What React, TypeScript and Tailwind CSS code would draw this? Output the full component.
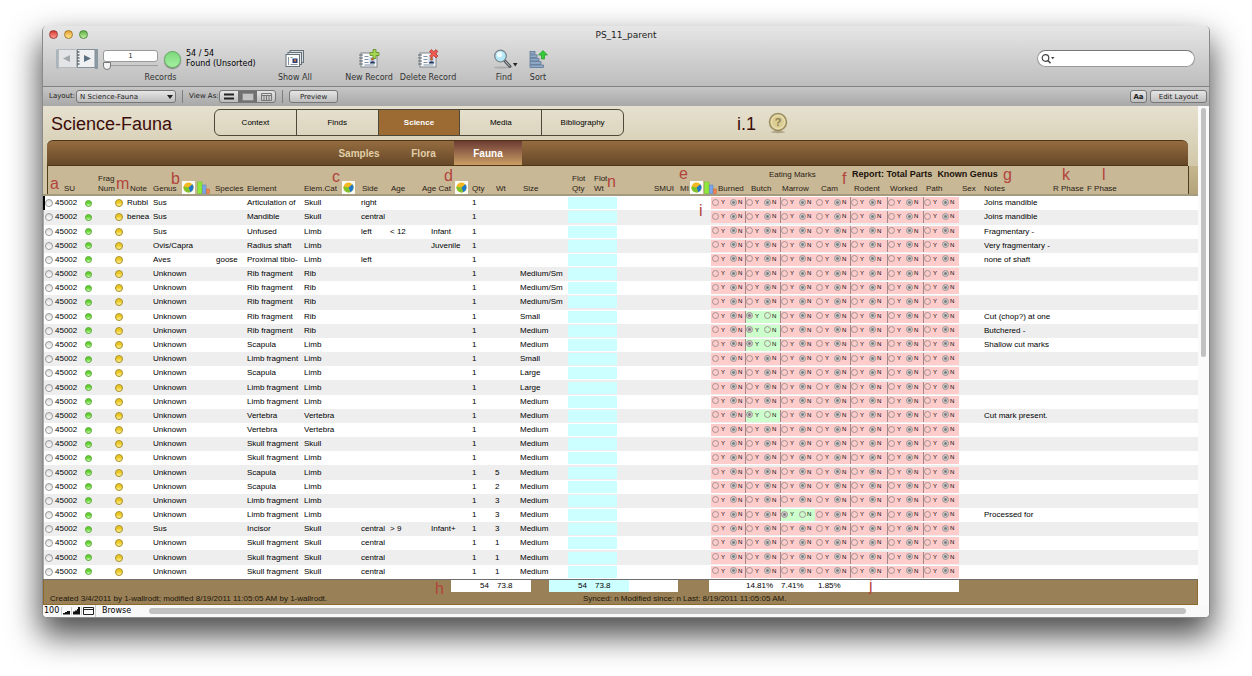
import { useState } from "react";
import clsx from "clsx";

interface FaunaRecord {
  note?: string;
  genus: string;
  species?: string;
  element: string;
  elemCat: string;
  side?: string;
  age?: string;
  ageCat?: string;
  wt?: string;
  size?: string;
  yes?: string;
  notes?: string;
}

const records: FaunaRecord[] = [
  { note: "Rubbl", genus: "Sus", element: "Articulation of", elemCat: "Skull", side: "right", notes: "Joins mandible" },
  { note: "benea", genus: "Sus", element: "Mandible", elemCat: "Skull", side: "central", notes: "Joins mandible" },
  { genus: "Sus", element: "Unfused", elemCat: "Limb", side: "left", age: "< 12", ageCat: "Infant", notes: "Fragmentary -" },
  { genus: "Ovis/Capra", element: "Radius shaft", elemCat: "Limb", ageCat: "Juvenile", notes: "Very fragmentary -" },
  { genus: "Aves", species: "goose", element: "Proximal tibio-", elemCat: "Limb", side: "left", notes: "none of shaft" },
  { genus: "Unknown", element: "Rib fragment", elemCat: "Rib", size: "Medium/Sm" },
  { genus: "Unknown", element: "Rib fragment", elemCat: "Rib", size: "Medium/Sm" },
  { genus: "Unknown", element: "Rib fragment", elemCat: "Rib", size: "Medium/Sm" },
  { genus: "Unknown", element: "Rib fragment", elemCat: "Rib", size: "Small", yes: "Butch", notes: "Cut (chop?) at one" },
  { genus: "Unknown", element: "Rib fragment", elemCat: "Rib", size: "Medium", yes: "Butch", notes: "Butchered -" },
  { genus: "Unknown", element: "Scapula", elemCat: "Limb", size: "Medium", yes: "Butch", notes: "Shallow cut marks" },
  { genus: "Unknown", element: "Limb fragment", elemCat: "Limb", size: "Small" },
  { genus: "Unknown", element: "Scapula", elemCat: "Limb", size: "Large" },
  { genus: "Unknown", element: "Limb fragment", elemCat: "Limb", size: "Large" },
  { genus: "Unknown", element: "Limb fragment", elemCat: "Limb", size: "Medium" },
  { genus: "Unknown", element: "Vertebra", elemCat: "Vertebra", size: "Medium", yes: "Butch", notes: "Cut mark present." },
  { genus: "Unknown", element: "Vertebra", elemCat: "Vertebra", size: "Medium" },
  { genus: "Unknown", element: "Skull fragment", elemCat: "Skull", size: "Medium" },
  { genus: "Unknown", element: "Skull fragment", elemCat: "Limb", size: "Medium" },
  { genus: "Unknown", element: "Scapula", elemCat: "Limb", wt: "5", size: "Medium" },
  { genus: "Unknown", element: "Scapula", elemCat: "Limb", wt: "2", size: "Medium" },
  { genus: "Unknown", element: "Limb fragment", elemCat: "Limb", wt: "3", size: "Medium" },
  { genus: "Unknown", element: "Limb fragment", elemCat: "Limb", wt: "3", size: "Medium", yes: "Marrow", notes: "Processed for" },
  { genus: "Sus", element: "Incisor", elemCat: "Skull", side: "central", age: "> 9", ageCat: "Infant+", wt: "3", size: "Medium" },
  { genus: "Unknown", element: "Skull fragment", elemCat: "Skull", side: "central", wt: "1", size: "Medium" },
  { genus: "Unknown", element: "Skull fragment", elemCat: "Skull", side: "central", wt: "1", size: "Medium" },
  { genus: "Unknown", element: "Skull fragment", elemCat: "Skull", side: "central", wt: "1", size: "Medium" },
];

const marks = [
  { name: "Burned", divider: false, th: "pl-[7px]" },
  { name: "Butch", divider: true, th: "pl-[6px]" },
  { name: "Marrow", divider: true, th: "pl-[2px]" },
  { name: "Cam", divider: false, th: "pl-[6px]" },
  { name: "Rodent", divider: true, th: "pl-[4px]" },
  { name: "Worked", divider: true, th: "pl-[3px]" },
  { name: "Path", divider: true, th: "pl-[3px]" },
];

const columnWidths = [
  "w-[11px]", "w-[29px]", "w-[13px]", "w-[17px]", "w-[13px]", "w-[25px]", "w-[62px]", "w-[32px]", "w-[57px]", "w-[57px]",
  "w-[29px]", "w-[32px]", "w-[50px]", "w-[23px]", "w-[25px]", "w-[50px]", "w-[24px]", "w-[25px]", "w-[94px]",
  "w-[34px]", "w-[35px]", "w-[35px]", "w-[35px]", "w-[37px]", "w-[36px]", "w-[36px]",
  "w-[23px]", "w-[68px]", "w-[35px]", "w-auto", "w-[10px]",
];

// Callout letters printed over the form
const callouts = [
  { letter: "a", pos: "left-[7px] top-[70px]" },
  { letter: "m", pos: "left-[73px] top-[70px]" },
  { letter: "b", pos: "left-[128px] top-[65px]" },
  { letter: "c", pos: "left-[289px] top-[63px]" },
  { letter: "d", pos: "left-[401px] top-[62px]" },
  { letter: "e", pos: "left-[636px] top-[60px]" },
  { letter: "n", pos: "left-[564px] top-[68px]" },
  { letter: "i", pos: "left-[656px] top-[97px]" },
  { letter: "f", pos: "left-[799px] top-[65px]" },
  { letter: "g", pos: "left-[960px] top-[61px]" },
  { letter: "k", pos: "left-[1019px] top-[61px]" },
  { letter: "l", pos: "left-[1059px] top-[61px]" },
  { letter: "h", pos: "left-[392px] top-[475px]" },
  { letter: "j", pos: "left-[826px] top-[472px]" },
];

function PieIcon() {
  return (
    <svg viewBox="0 0 13 13" className="size-[13px] shrink-0" aria-hidden="true">
      <rect width="13" height="13" fill="#fbfbf5" />
      <circle cx="6.5" cy="6.5" r="5" fill="#f4b820" />
      <path d="M6.5 6.5 10.4 3.3A5 5 0 0 1 8 11.2Z" fill="#1e78c8" />
      <path d="M6.5 6.5 8 11.2A5 5 0 0 1 1.6 5.6Z" fill="#7cc22c" />
    </svg>
  );
}

function BarsIcon() {
  return (
    <svg viewBox="0 0 13 13" className="size-[13px] shrink-0" aria-hidden="true">
      <rect x="0.5" y="1" width="4.5" height="11.5" fill="#8fe83a" stroke="#6cbf28" strokeWidth="0.5" />
      <rect x="5.5" y="4" width="3.5" height="8.5" fill="#7ba6e8" stroke="#5580c4" strokeWidth="0.5" />
      <rect x="9.5" y="8" width="2.8" height="4.500" fill="#ee8450" stroke="#c96030" strokeWidth="0.5" />
    </svg>
  );
}

function RecordSheet() {
  return (
    <>
      <rect x="3" y="5" width="16" height="14" fill="#fafafa" stroke="#7e868c" />
      <path d="M1 7h4M1 10h4M1 13h4M1 16h4" stroke="#5f6a74" strokeWidth="1.2" />
      <path d="M6.500 8.500h4M6.500 11.500h4M6.500 14.500h4M6.500 17h10" stroke="#7f93a8" />
      <rect x="11.500" y="9" width="6" height="6.500" fill="#c4d4ea" />
      <circle cx="14.500" cy="11" r="1.500" fill="#b5642c" />
      <path d="M12 15.500c0-3 5-3 5 0z" fill="#22345a" />
    </>
  );
}

function ShowAllIcon() {
  return (
    <svg viewBox="0 0 22 22" className="size-[22px]" aria-hidden="true">
      <rect x="6" y="2.500" width="13.500" height="12" fill="#d5dade" stroke="#66717a" />
      <rect x="4" y="4.500" width="13.500" height="12" fill="#e4e7ea" stroke="#66717a" />
      <rect x="2" y="6.500" width="13.500" height="12" fill="#fafafa" stroke="#66717a" />
      <path d="M4.500 9v8M6.500 9.500h2M6.500 16.500h7" stroke="#8a959e" />
      <rect x="8.500" y="10.500" width="5" height="4.500" fill="#2b3f7a" />
      <rect x="10" y="11.500" width="2" height="2" fill="#d97a3c" />
    </svg>
  );
}

function NewRecordIcon() {
  return (
    <svg viewBox="0 0 22 22" className="size-[22px]" aria-hidden="true">
      <RecordSheet />
      <path d="M15 1.500h3v3h3v3h-3v3h-3v-3h-3v-3h3z" fill="#a6d455" stroke="#5f8f1f" strokeWidth="0.800" />
    </svg>
  );
}

function DeleteRecordIcon() {
  return (
    <svg viewBox="0 0 22 22" className="size-[22px]" aria-hidden="true">
      <RecordSheet />
      <path d="m12.500 3.500 2-2 2.200 2.200 2.200-2.200 2 2L18.700 5.700l2.200 2.200-2 2-2.200-2.200-2.200 2.200-2-2 2.200-2.200z" fill="#ee5a50" stroke="#a82a22" strokeWidth="0.700" />
    </svg>
  );
}

function FindIcon() {
  return (
    <svg viewBox="0 0 28 22" className="h-[22px] w-[28px]" aria-hidden="true">
      <ellipse cx="12" cy="19.500" rx="8" ry="1" fill="#8d8d8d" opacity="0.500" />
      <path d="m14.500 12.500 5.500 6" stroke="#50555a" strokeWidth="3" strokeLinecap="round" />
      <path d="m15.500 13.500 4 4.500" stroke="#c8ccd0" strokeWidth="1" strokeLinecap="round" />
      <circle cx="10.500" cy="8" r="5.800" fill="#b5e8f6" stroke="#7d868d" strokeWidth="1.300" />
      <circle cx="9.500" cy="6.500" r="2.800" fill="#eefbff" />
      <path d="M23 15h4.500l-2.250 3.500z" fill="#222" />
    </svg>
  );
}

function SortIcon() {
  return (
    <svg viewBox="0 0 22 22" className="size-[22px]" aria-hidden="true">
      <g fill="#8fa9c8" stroke="#566f8e" strokeWidth="0.700">
        <rect x="3" y="3.500" width="5" height="2.600" />
        <rect x="3" y="6.900" width="7" height="2.600" />
        <rect x="3" y="10.300" width="9" height="2.600" />
        <rect x="3" y="13.700" width="11" height="2.600" />
        <rect x="3" y="17" width="13.500" height="2.600" />
      </g>
      <path d="M16 2.500 20.500 7h-3v4h-3V7h-3z" fill="#35cc35" stroke="#1c9a24" strokeWidth="0.700" />
    </svg>
  );
}

function ToolbarButton({ label, width, icon }: { label: string; width: string; icon: React.ReactNode }) {
  return (
    <button className={clsx("flex flex-col items-center gap-[2px] whitespace-nowrap", width)}>
      {icon}
      <span className="leading-[12px]">{label}</span>
    </button>
  );
}

function TitleBar() {
  return (
    <div className="flex h-[17px] items-center px-[6px]">
      <div className="flex flex-1 gap-[6px]">
        <button aria-label="Close" className="size-[9px] rounded-full border border-[#9a3a36] bg-linear-to-b from-[#d8302c] to-[#ff9a94]" />
        <button aria-label="Minimize" className="size-[9px] rounded-full border border-[#a37a2c] bg-linear-to-b from-[#e8a02c] to-[#ffe88c]" />
        <button aria-label="Zoom" className="size-[9px] rounded-full border border-[#4e8a3c] bg-linear-to-b from-[#5cae44] to-[#c4f2a0]" />
      </div>
      <div className="text-[9px] leading-[12px] text-[#222]">PS_11_parent</div>
      <div className="flex-1" />
    </div>
  );
}

function Toolbar() {
  const [record, setRecord] = useState("1");
  return (
    <div className="flex h-[43px] items-start pt-[5px] pr-[14px] pl-[12px] text-[8px] text-[#333]">
      <div className="w-[211px]">
        <div className="flex h-[24px] items-start">
          <div className="flex">
            <button aria-label="Previous record">
              <svg viewBox="0 0 22 22" className="size-[22px]">
                <path d="M1 1.500h3v19H1z" fill="#a9b4bb" />
                <rect x="3.500" y="1.500" width="18" height="18" fill="#e2e4e5" stroke="#b4babe" />
                <path d="M15 7v7l-7-3.500z" fill="#a2a8ac" />
              </svg>
            </button>
            <button aria-label="Next record">
              <svg viewBox="0 0 22 22" className="size-[22px]">
                <path d="M18 1h3v20h-3z" fill="#8b99a3" />
                <rect x="0.500" y="1.500" width="17.500" height="18" fill="#eef0f1" stroke="#85919a" />
                <path d="M7 7v7l7-3.500z" fill="#5a6f80" />
                <path d="M0 4h2.500M0 7h2.500M0 10h2.500M0 13h2.500M0 16h2.500" stroke="#5f6a72" strokeWidth="1.300" />
              </svg>
            </button>
          </div>
          <div className="ml-[4px] flex w-[55px] flex-col pt-[2px]">
            <input
              aria-label="Current record"
              value={record}
              onChange={(e) => setRecord(e.target.value)}
              className="h-[12px] w-full rounded-[3px] border border-[#9a9a9a] bg-white text-center text-[7px] leading-[10px] outline-none"
            />
            <input
              type="range"
              aria-label="Record position"
              min={1}
              max={54}
              defaultValue={1}
              className="h-[8px] w-full appearance-none bg-[linear-gradient(#8d8d8d,#d8d8d8)] bg-[length:100%_2px] bg-center bg-no-repeat [&::-webkit-slider-thumb]:size-[8px] [&::-webkit-slider-thumb]:appearance-none [&::-webkit-slider-thumb]:rounded-b-full [&::-webkit-slider-thumb]:border [&::-webkit-slider-thumb]:border-[#777] [&::-webkit-slider-thumb]:bg-[#f4f4f4]"
            />
          </div>
          <div className="mt-[3px] ml-[6px] size-[17px] rounded-full border border-[#5fa860] bg-linear-to-b from-[#7ed87c] to-[#a4f0a0] shadow-[0_1px_1px_#777]" />
          <div className="ml-[5px] pt-px leading-[10px] whitespace-nowrap text-black">
            <p>54 / 54</p>
            <p>Found (Unsorted)</p>
          </div>
        </div>
        <p className="text-center leading-[12px]">Records</p>
      </div>
      <div className="ml-[4px] flex">
        <ToolbarButton label="Show All" width="w-[50px]" icon={<ShowAllIcon />} />
      </div>
      <div className="ml-[19px] flex">
        <ToolbarButton label="New Record" width="w-[60px]" icon={<NewRecordIcon />} />
        <ToolbarButton label="Delete Record" width="w-[58px]" icon={<DeleteRecordIcon />} />
      </div>
      <div className="ml-[30px] flex">
        <ToolbarButton label="Find" width="w-[34px]" icon={<FindIcon />} />
        <ToolbarButton label="Sort" width="w-[34px]" icon={<SortIcon />} />
      </div>
      <div className="mt-[2px] ml-auto flex h-[17px] w-[158px] items-center rounded-full border border-[#999] border-t-[#777] bg-white pl-[3px]">
        <svg viewBox="0 0 14 12" className="h-[12px] w-[14px] shrink-0" fill="none" stroke="#444">
          <circle cx="4.500" cy="5" r="3.300" strokeWidth="1.200" />
          <path d="m7 7.500 2.500 2.800" strokeWidth="1.500" />
          <path d="M10 4h3.500l-1.750 2.300z" fill="#444" stroke="none" />
        </svg>
        <input type="search" aria-label="Search" className="w-full min-w-0 bg-transparent text-[8px] outline-none" />
      </div>
    </div>
  );
}

function LayoutBar() {
  const button = "h-[13px] rounded-[3px] border border-[#777] bg-linear-to-b from-[#e6e6e6] to-[#bdbdbd] leading-[10px]";
  return (
    <div className="flex h-[20px] items-center border-t border-[#808080] bg-linear-to-b from-[#c6c6c6] to-[#a8a8a8] pr-[2px] pl-[6px] text-[7px] text-[#1c1c1c]">
      <label htmlFor="layout" className="w-[27px]">Layout:</label>
      <div className="relative w-[100px]">
        <select id="layout" className={clsx(button, "block w-full appearance-none pl-[3px]")}>
          <option>N Science-Fauna</option>
        </select>
        <svg viewBox="0 0 6 4" className="pointer-events-none absolute top-[5px] right-[3px] h-[4px] w-[6px]">
          <path d="M0 0h6L3 4z" fill="#222" />
        </svg>
      </div>
      <div className="ml-[6px] h-[13px] w-px bg-[#7d7d7d]" />
      <span className="ml-[6px] w-[30px] whitespace-nowrap">View As:</span>
      <div className="flex h-[13px] overflow-hidden rounded-[3px] border border-[#777] bg-linear-to-b from-[#e6e6e6] to-[#bdbdbd]">
        <button aria-label="Form view" className="flex w-[18px] items-center justify-center">
          <svg viewBox="0 0 10 8" className="h-[8px] w-[10px]"><path d="M0 1.500h10M0 5.500h10" stroke="#222" strokeWidth="2" /></svg>
        </button>
        <button aria-label="List view" className="flex w-[19px] items-center justify-center bg-[#707070]">
          <svg viewBox="0 0 12 8" className="h-[8px] w-[12px]"><rect x="0.500" y="0.500" width="11" height="7" fill="#c4c4c4" stroke="#8a8a8a" /></svg>
        </button>
        <button aria-label="Table view" className="flex w-[18px] items-center justify-center">
          <svg viewBox="0 0 11 8" className="h-[8px] w-[11px]" fill="none" stroke="#777">
            <path d="M0.500 0.500h10v7h-10zM0.500 2.500h10M3 2.500v5M5.500 2.500v5M8 2.500v5" />
          </svg>
        </button>
      </div>
      <div className="ml-[6px] h-[13px] w-px bg-[#7d7d7d]" />
      <button className={clsx(button, "ml-[6px] w-[49px]")}>Preview</button>
      <button className={clsx(button, "ml-auto w-[17px] font-bold")}>Aa</button>
      <button className={clsx(button, "ml-[3px] w-[57px] whitespace-nowrap")}>Edit Layout</button>
    </div>
  );
}

function FormHeader() {
  const tabs = ["Context", "Finds", "Science", "Media", "Bibliography"];
  return (
    <div className="flex h-[34px] items-start pt-[3px] pl-[8px] text-[#3c0d08]">
      <h1 className="w-[163px] text-[18px] leading-[30px]">Science-Fauna</h1>
      <nav className="flex h-[27px] w-[410px] overflow-hidden rounded-[6px] border border-[#4d4838] text-[8px] text-black">
        {tabs.map((tab, i) => (
          <button
            key={tab}
            className={clsx(
              "flex-1 border-[#4d4838]",
              i > 0 && "border-l",
              tab === "Science" && "bg-[#9c6a33] font-bold text-white"
            )}
          >
            {tab}
          </button>
        ))}
      </nav>
      <span className="ml-[113px] w-[31px] text-[18px] leading-[30px]">i.1</span>
      <button aria-label="Help" className="mt-[3px]">
        <svg viewBox="0 0 20 22" className="h-[22px] w-[20px]">
          <ellipse cx="10" cy="20" rx="7" ry="1.200" fill="#8e8664" opacity="0.600" />
          <circle cx="10" cy="10" r="8.500" fill="#dccd94" stroke="#9a8d60" strokeWidth="1.500" />
          <circle cx="10" cy="10" r="6.500" fill="none" stroke="#f1e8c4" strokeWidth="0.800" />
          <text x="10" y="14" textAnchor="middle" fontSize="11" fontWeight="bold" fill="#8d8052">?</text>
        </svg>
      </button>
    </div>
  );
}

function YesNoCell({ row, name, divider, yes }: { row: number; name: string; divider: boolean; yes: boolean }) {
  const radio = "size-[7px] appearance-none rounded-full border border-[#a39393] checked:bg-[radial-gradient(#777_25%,#ccc_50%)]";
  const group = `${name}-${row}`;
  return (
    <td className="p-0">
      <div
        className={clsx(
          "flex h-[12px] items-start pt-[1px] text-[6px] leading-[8px]",
          yes ? "bg-[#ccffcc]" : "bg-[#ffcccc]",
          divider ? "border-l border-[#a08888]" : "border-l border-transparent"
        )}
      >
        <label className="flex w-[18px] items-center gap-[2px]">
          <input type="radio" name={group} defaultChecked={yes} className={radio} />Y
        </label>
        <label className="flex items-center gap-[1px]">
          <input type="radio" name={group} defaultChecked={!yes} className={radio} />N
        </label>
      </div>
    </td>
  );
}

function RecordRow({ record, index }: { record: FaunaRecord; index: number }) {
  const cell = "overflow-hidden p-0 pl-[2px]";
  return (
    <tr className={index % 2 ? "bg-[#eeeeee]" : "bg-white"}>
      <td className={clsx("p-0 pl-[2px]", index === 0 ? "shadow-[inset_2px_0_#000]" : "shadow-[inset_1px_0_#aaa]")}>
        <button aria-label="Open record" className="block size-[8px] rounded-full border border-[#999] bg-linear-to-b from-[#ddd] to-white" />
      </td>
      <td className="p-0 pl-[1px]">45002</td>
      <td className="p-0 pl-[2px]">
        <button aria-label="Status" className="block size-[7px] rounded-full border border-[#5da83a] bg-linear-to-b from-[#5fd02c] from-40% to-[#d0ffb0]" />
      </td>
      <td />
      <td className="p-0 pl-[2px]">
        <button aria-label="Note" className="block size-[8px] rounded-full border border-[#a8902c] bg-linear-to-b from-[#ecc822] from-40% to-[#fff690]" />
      </td>
      <td className="overflow-hidden p-0 pl-[1px]">{record.note}</td>
      <td className={cell}>{record.genus}</td>
      <td className="overflow-hidden p-0 pl-[3px]">{record.species}</td>
      <td className={cell}>{record.element}</td>
      <td className={cell}>{record.elemCat}</td>
      <td className={cell}>{record.side}</td>
      <td className={cell}>{record.age}</td>
      <td className="p-0 pl-[11px]">{record.ageCat}</td>
      <td className={cell}>1</td>
      <td className={cell}>{record.wt}</td>
      <td className={cell}>{record.size}</td>
      <td colSpan={2} className="p-0">
        <div className="h-[12px] bg-[#ccffff]" />
      </td>
      <td />
      {marks.map((mark) => (
        <YesNoCell key={mark.name} row={index} name={mark.name} divider={mark.divider} yes={record.yes === mark.name} />
      ))}
      <td />
      <td colSpan={4} className={cell}>{record.notes}</td>
    </tr>
  );
}

function FaunaTable() {
  const th = "p-0 pl-[2px] align-bottom font-normal";
  return (
    <table className="w-full flex-1 table-fixed border-collapse text-left text-[8px] leading-[10px] whitespace-nowrap">
      <colgroup>
        {columnWidths.map((width, i) => (
          <col key={i} className={width} />
        ))}
      </colgroup>
      <thead className="text-[#2a2115]">
        <tr className="h-[16px] bg-[#c8b896]">
          <th rowSpan={2} className="bg-[linear-gradient(to_right,#d2c7a6_4px,#4f3d1d_4px,#4f3d1d_5px,#c8b896_5px)] p-0" />
          <th rowSpan={2} className={clsx(th, "pl-[10px]")}>SU</th>
          <th rowSpan={2} />
          <th rowSpan={2} className={clsx(th, "pl-[1px]")}>Frag<br />Num</th>
          <th rowSpan={2} />
          <th rowSpan={2} className={clsx(th, "pl-[4px]")}>Note</th>
          <th rowSpan={2} className={clsx(th, "pl-[1px]")}>
            <div className="flex items-end gap-[2px]"><span className="w-[27px]">Genus</span><PieIcon /><BarsIcon /></div>
          </th>
          <th rowSpan={2} className={clsx(th, "pl-[1px]")}>Species</th>
          <th rowSpan={2} className={th}>Element</th>
          <th rowSpan={2} className={th}>
            <div className="flex items-end gap-[2px]"><span className="w-[36px]">Elem.Cat</span><PieIcon /></div>
          </th>
          <th rowSpan={2} className={clsx(th, "pl-[3px]")}>Side</th>
          <th rowSpan={2} className={clsx(th, "pl-[3px]")}>Age</th>
          <th rowSpan={2} className={clsx(th, "pl-[1px]")}>
            <div className="flex items-end gap-[2px]"><span className="w-[31px]">Age Cat</span><PieIcon /></div>
          </th>
          <th rowSpan={2} className={th}>Qty</th>
          <th rowSpan={2} className={clsx(th, "pl-[3px]")}>Wt</th>
          <th rowSpan={2} className={clsx(th, "pl-[5px]")}>Size</th>
          <th rowSpan={2} className={clsx(th, "pl-[4px]")}>Flot<br />Qty</th>
          <th rowSpan={2} className={clsx(th, "pl-[1px]")}>Flot<br />Wt</th>
          <th rowSpan={2} className={clsx(th, "pl-[37px]")}>
            <div className="flex items-end gap-[1px]"><span className="w-[25px] shrink-0">SMUI</span><span>MI</span><PieIcon /><BarsIcon /></div>
          </th>
          <td />
          <th colSpan={3} className="p-0 pt-[2px] pl-[24px] font-normal">Eating Marks</th>
          <th colSpan={7} className="p-0 pl-[2px] text-[9px] font-bold text-[#1a1209]">
            <span>Report:</span> <span>Total Parts</span>&nbsp; <span>Known Genus</span>
          </th>
          <th rowSpan={2} className="bg-linear-to-b from-[#c4b68e] to-[#b5a37a] p-0 shadow-[inset_1px_0_#4f3d1d]" />
        </tr>
        <tr className="h-[13px] bg-[#c8b896]">
          {marks.map((mark) => (
            <th key={mark.name} className={clsx("p-0 align-bottom font-normal", mark.th)}>{mark.name}</th>
          ))}
          <th className={clsx(th, "pl-[3px]")}>Sex</th>
          <th className={th}>Notes</th>
          <th className={clsx(th, "pl-[3px]")}>R Phase</th>
          <th className={clsx(th, "pl-0")}>F Phase</th>
        </tr>
      </thead>
      <tbody className="border-t-2 border-[#a39a80]">
        {records.map((record, i) => (
          <RecordRow key={i} record={record} index={i} />
        ))}
      </tbody>
    </table>
  );
}

function FormFooter() {
  return (
    <div className="h-[26px] border border-t-[#6e6e6e] border-[#8c6a2c] bg-[#998056] text-[8px] leading-[12px] text-[#1c160a]">
      <div className="flex h-[12px] pl-[407px] text-black">
        <div className="flex w-[80px] bg-white pl-[29px]">
          <span className="w-[17px]">54</span>
          <span>73.8</span>
        </div>
        <div className="ml-[18px] flex w-[80px] bg-[#ccffff] pl-[29px]">
          <span className="w-[17px]">54</span>
          <span>73.8</span>
        </div>
        <div className="w-[49px] bg-white" />
        <div className="ml-[31px] flex w-[250px] bg-white pl-[37px]">
          <span className="w-[35px]">14.81%</span>
          <span className="w-[37px]">7.41%</span>
          <span>1.85%</span>
        </div>
      </div>
      <div className="flex pt-[1px] pl-[6px] whitespace-nowrap">
        <p className="w-[533px]">Created 3/4/2011 by 1-wallrodt; modified 8/19/2011 11:05:05 AM by 1-wallrodt.</p>
        <p>Synced: n Modified since: n Last: 8/19/2011 11:05:05 AM.</p>
      </div>
    </div>
  );
}

function StatusBar() {
  return (
    <div className="flex h-[12px] items-center bg-[#f8f8f8] text-[8px] leading-[12px] text-black">
      <span className="w-[18px] pl-[1px]">100</span>
      <button aria-label="Zoom out" className="w-[10px] border-l border-[#ccc]">
        <svg viewBox="0 0 9 8" className="h-[8px] w-[9px]"><path d="M1 7.500V6h2V5h2V4h3v3.500z" fill="#111" /></svg>
      </button>
      <button aria-label="Zoom in" className="w-[10px] border-l border-[#ccc]">
        <svg viewBox="0 0 9 8" className="h-[8px] w-[9px]"><path d="M1 7.500V4.500h2v-1h2V2h1V0h2v7.500z" fill="#111" /></svg>
      </button>
      <button aria-label="Toggle toolbar" className="w-[14px] border-l border-[#ccc] pl-[1px]">
        <svg viewBox="0 0 11 8" className="h-[8px] w-[11px]"><path d="M0.500 0.500h10v7h-10zM0.500 2.500h10" fill="none" stroke="#222" /></svg>
      </button>
      <span className="w-[54px] border-l border-[#ccc] pl-[6px]">Browse</span>
      <div className="mr-[23px] h-[6px] flex-1 rounded-full bg-[#c1c1c1]" />
    </div>
  );
}

export default function App() {
  return (
    <div className="h-screen overflow-hidden bg-white px-[42px] pt-[26px] font-['Liberation_Sans',Arial,sans-serif]">
      <div className="flex h-[calc(100vh-84px)] flex-col overflow-hidden rounded-[5px] border-x border-b border-[#8a8a8a] bg-white shadow-[0_16px_32px_2px_rgba(0,0,0,0.7)]">
        <div className="bg-linear-to-b from-[#e6e6e6] to-[#b0b0b0] font-['DejaVu_Sans',sans-serif]">
          <TitleBar />
          <Toolbar />
          <LayoutBar />
        </div>

        <main className="relative flex min-h-0 flex-1">
          <div className="flex min-w-0 flex-1 flex-col bg-linear-to-b from-[#e6e1d0] to-[#c8bc98] to-[88px]">
            <FormHeader />
            <nav className="mr-[10px] ml-[4px] flex h-[26px] rounded-t-[6px] border-t border-b border-[#4f3518] bg-linear-to-b from-[#956c40] to-[#664828] pl-[272px] text-[10px] font-bold text-[#e0cfa8]">
              <button className="w-[80px]">Samples</button>
              <button className="w-[49px]">Flora</button>
              <span className="w-[6px]" />
              <button className="w-[68px] bg-linear-to-b from-[#6c3c34] to-[#cc9f64] text-white">Fauna</button>
            </nav>
            <FaunaTable />
            <FormFooter />
          </div>
          <div className="w-[11px] bg-[#fafafa] px-[3px] pt-[2px]">
            <div className="h-1/2 rounded-full bg-[#c1c1c1]" />
          </div>
          {callouts.map(({ letter, pos }) => (
            <span key={letter} className={clsx("pointer-events-none absolute text-[16px] leading-[16px] text-[#b2443c]", pos)}>
              {letter}
            </span>
          ))}
        </main>

        <div className="font-['DejaVu_Sans',sans-serif]">
          <StatusBar />
        </div>
      </div>
    </div>
  );
}
